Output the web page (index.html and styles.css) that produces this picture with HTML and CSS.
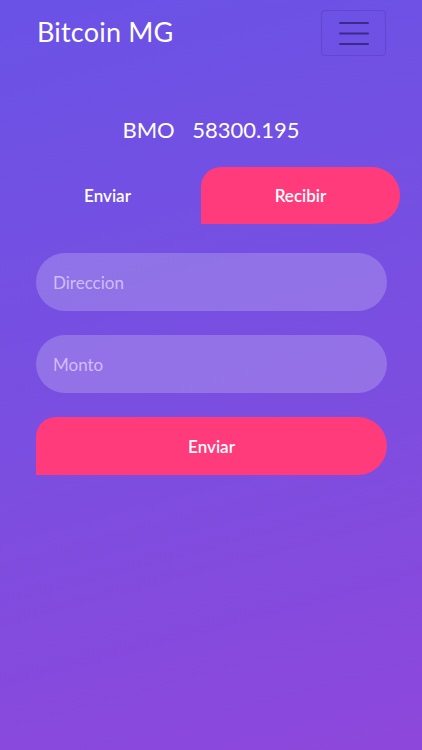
FILE: index.html
```html
<!DOCTYPE html>
<html lang="es">
<head>
  <meta charset="UTF-8" />
  <meta name="viewport" content="width=device-width, initial-scale=1.0" />
  <title>Bitcoin MG</title>
  <link rel="stylesheet" href="styles.css">
</head>
<body>

  <nav class="navbar">
    <a class="brand" href="#">Bitcoin MG</a>
    <button class="toggler" type="button" aria-label="Menu">
      <svg width="30" height="24" viewBox="0 0 30 24">
        <path d="M1 2h28M1 12.5h28M1 23h28" stroke="#3c2a8a" stroke-width="2" stroke-linecap="round"/>
      </svg>
    </button>
  </nav>

  <div class="balance">
    <span>BMO</span>
    <span>58300.195</span>
  </div>

  <div class="tabs">
    <button class="tab">Enviar</button>
    <button class="tab active">Recibir</button>
  </div>

  <form class="send-form">
    <input type="text" placeholder="Direccion" />
    <input type="text" placeholder="Monto" />
    <button type="button" class="send-btn">Enviar</button>
  </form>

</body>
</html>
```

FILE: styles.css
```css
/* Global */
* {
  box-sizing: border-box;
}
html, body {
  height: 100%;
}
body {
  margin: 0;
  font-family: Lato, "Open Sans", sans-serif;
  color: #fff;
  background: linear-gradient(165deg, #6a52e6 0%, #7b4ee0 55%, #8e47db 100%);
  min-height: 750px;
}

/* Navbar */
.navbar {
  display: flex;
  justify-content: space-between;
  align-items: center;
  padding: 10px 37px 0 37px;
  height: 56px;
}
.brand {
  color: #fff;
  text-decoration: none;
  font-size: 27px;
  letter-spacing: 0.2px;
  margin-top: -4px;
}
.toggler {
  width: 65px;
  height: 46px;
  margin-right: -1px;
  display: flex;
  align-items: center;
  justify-content: center;
  background: transparent;
  border: 1px solid rgba(60, 40, 140, 0.25);
  border-radius: 4px;
  padding: 0;
}

/* Saldo */
.balance {
  text-align: center;
  font-size: 22px;
  margin-top: 61px;
  line-height: 26px;
}
.balance span + span {
  margin-left: 12px;
}

/* Tabs */
.tabs {
  display: grid;
  grid-template-columns: 187px 199px;
  margin: 24px 0 0 14px;
}
.tab {
  height: 57px;
  border: none;
  background: transparent;
  color: #fff;
  font-family: inherit;
  font-size: 17px;
  font-weight: 600;
  padding: 0;
}
.tab.active {
  background: #ff3b7b;
  border-radius: 20px 28px 28px 0;
}

/* Form */
.send-form {
  display: flex;
  flex-direction: column;
  gap: 24px;
  padding: 29px 35px 0 36px;
}
.send-form input {
  height: 58px;
  border: none;
  border-radius: 29px;
  background: rgba(255, 255, 255, 0.2);
  padding: 0 17px;
  font-family: inherit;
  font-size: 17px;
  color: #fff;
  outline: none;
}
.send-form input::placeholder {
  color: rgba(230, 215, 255, 0.75);
}
.send-btn {
  height: 58px;
  border: none;
  border-radius: 20px 29px 29px 0;
  background: #ff3b7b;
  color: #fff;
  font-family: inherit;
  font-size: 17px;
  font-weight: 600;
}
```
